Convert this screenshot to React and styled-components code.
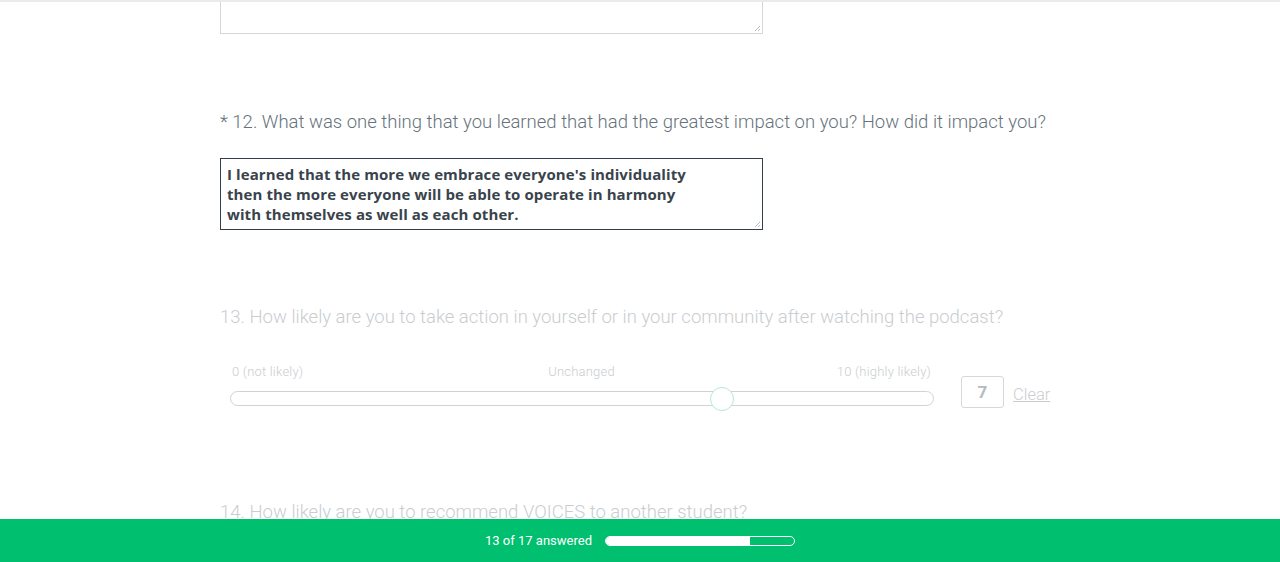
import React from "react";
import styled, { createGlobalStyle } from "styled-components";

const Global = createGlobalStyle`
  html, body { margin: 0; padding: 0; background: #fff; }
  body { font-family: Roboto, "Noto Sans", sans-serif; overflow: hidden; }
`;

const Page = styled.div`
  border-top: 2px solid #e9ecee;
`;

const Content = styled.div`
  padding-left: 220px;
  display: flex;
  flex-direction: column;
`;

const CutTextBox = styled.div`
  width: 543px;
  height: 32px;
  border: 1px solid #d3d7da;
  border-top: none;
  box-sizing: border-box;
  position: relative;
`;

const Grip = styled.svg`
  position: absolute;
  right: 1px;
  bottom: 1px;
`;

const Question = styled.div`
  font-size: 18.5px;
  font-weight: 300;
  line-height: 24px;
  color: ${(p) => (p.$disabled ? "#c9cdd0" : "#66727b")};
  margin-top: ${(p) => p.$top}px;
  white-space: nowrap;
`;

const Answer = styled.div`
  width: 543px;
  height: 72px;
  margin-top: 24px;
  border: 1px solid #333e48;
  box-sizing: border-box;
  padding: 5px 6px 6px;
  font-family: "Open Sans", "Noto Sans", sans-serif;
  font-size: 15px;
  font-weight: 700;
  letter-spacing: 0.1px;
  line-height: 20px;
  color: #39434c;
  position: relative;
  white-space: nowrap;
`;

const SliderRow = styled.div`
  display: flex;
  align-items: flex-end;
  margin-top: 35px;
`;

const SliderCol = styled.div`
  width: 704px;
  margin-left: 10px;
  display: flex;
  flex-direction: column;
`;

const Labels = styled.div`
  display: grid;
  grid-template-columns: 1fr auto 1fr;
  font-size: 13px;
  font-weight: 300;
  letter-spacing: 0.2px;
  color: #c9cdd0;
  line-height: 16px;
  padding: 0 3px 0 2px;
`;

const Label = styled.span`
  text-align: ${(p) => p.$align};
`;

const Track = styled.div`
  margin-top: 11px;
  height: 15px;
  border: 1px solid #cfd3d6;
  border-radius: 8px;
  box-sizing: border-box;
  position: relative;
`;

const Thumb = styled.div`
  position: absolute;
  top: 50%;
  width: 24px;
  height: 24px;
  border-radius: 50%;
  background: #fff;
  border: 1px solid #b6e8d2;
  box-sizing: border-box;
  transform: translate(-50%, -50%);
`;

const ValueBox = styled.div`
  margin-left: 27px;
  margin-bottom: -2px;
  width: 43px;
  height: 32px;
  border: 1px solid #d6d9dc;
  border-radius: 3px;
  box-sizing: border-box;
  display: flex;
  align-items: center;
  justify-content: center;
  font-size: 17px;
  font-weight: 700;
  color: #b5babe;
`;

const Clear = styled.span`
  margin-left: 9px;
  margin-bottom: 1px;
  font-size: 16.5px;
  font-weight: 300;
  color: #c9cdd0;
  text-decoration: underline;
  line-height: 20px;
`;

const Footer = styled.div`
  position: fixed;
  left: 0;
  right: 0;
  bottom: 0;
  height: 43px;
  background: #00bf6f;
  display: flex;
  align-items: center;
  justify-content: center;
  gap: 13px;
`;

const FooterText = styled.span`
  color: #fff;
  font-size: 13px;
  font-family: Roboto, sans-serif;
`;

const Progress = styled.div`
  width: 190px;
  height: 10px;
  border: 1px solid #fff;
  border-radius: 5px;
  box-sizing: border-box;
  overflow: hidden;
  display: flex;
`;

const ProgressFill = styled.div`
  background: #fff;
  height: 100%;
`;

const ResizeGrip = () => (
  <Grip width="7" height="7" viewBox="0 0 7 7">
    <path d="M6 1 L1 6 M6 4 L4 6" stroke="#b8bcbf" strokeWidth="1" fill="none" />
  </Grip>
);

export default function App() {
  const answered = 13;
  const total = 17;
  return (
    <>
      <Global />
      <Page>
        <Content>
          <CutTextBox>
            <ResizeGrip />
          </CutTextBox>
          <Question $top={76}>
            * 12. What was one thing that you learned that had the greatest impact on you? How did it impact you?
          </Question>
          <Answer>
            I learned that the more we embrace everyone's individuality
            <br />
            then the more everyone will be able to operate in harmony
            <br />
            with themselves as well as each other.
            <ResizeGrip />
          </Answer>
          <Question $top={75} $disabled>
            13. How likely are you to take action in yourself or in your community after watching the podcast?
          </Question>
          <SliderRow>
            <SliderCol>
              <Labels>
                <Label $align="left">0 (not likely)</Label>
                <Label $align="center">Unchanged</Label>
                <Label $align="right">10 (highly likely)</Label>
              </Labels>
              <Track>
                <Thumb style={{ left: "70%" }} />
              </Track>
            </SliderCol>
            <ValueBox>7</ValueBox>
            <Clear>Clear</Clear>
          </SliderRow>
          <Question $top={94} $disabled>
            14. How likely are you to recommend VOICES to another student?
          </Question>
        </Content>
      </Page>
      <Footer>
        <FooterText>
          {answered} of {total} answered
        </FooterText>
        <Progress>
          <ProgressFill style={{ width: `${(answered / total) * 100}%` }} />
        </Progress>
      </Footer>
    </>
  );
}
